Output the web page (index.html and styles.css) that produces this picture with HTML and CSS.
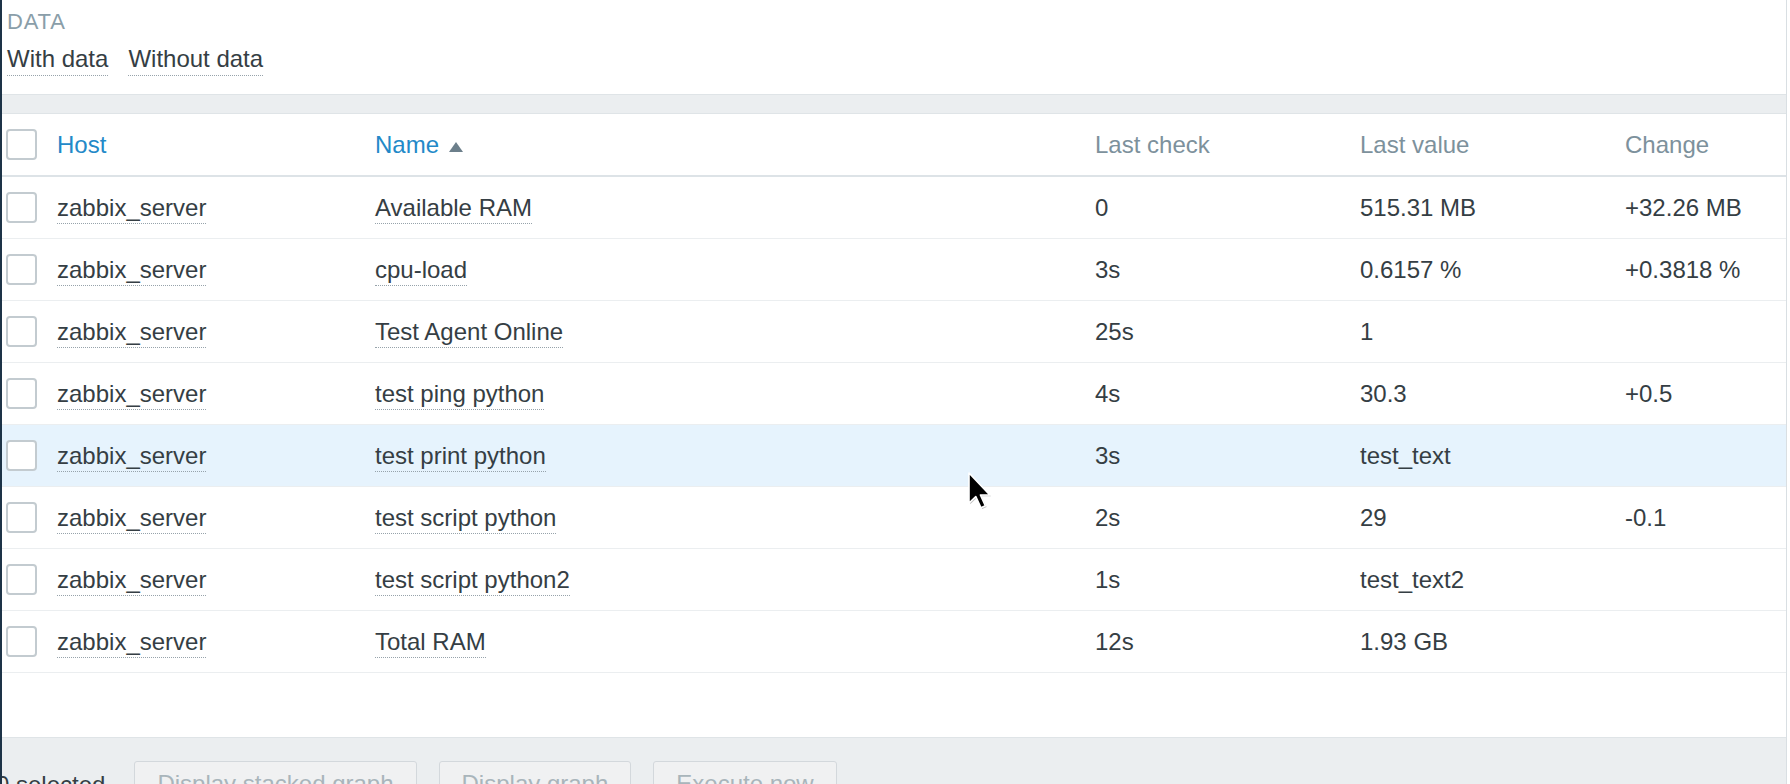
FILE: index.html
```html
<!DOCTYPE html>
<html>
<head>
<meta charset="utf-8">
<title>Latest data</title>
<link rel="stylesheet" href="styles.css">
</head>
<body>
<div class="page">
  <section class="subfilter">
    <div class="subfilter-label">DATA</div>
    <div class="subfilter-links">
      <span class="link">With data</span>
      <span class="link">Without data</span>
    </div>
  </section>
  <div class="band"></div>
  <div class="list">
    <table class="data-table">
      <colgroup>
        <col class="c-check">
        <col class="c-host">
        <col class="c-name">
        <col class="c-mid">
        <col class="c-mid">
        <col>
      </colgroup>
      <thead>
        <tr>
          <th><span class="checkbox"></span></th>
          <th><span class="sort-link">Host</span></th>
          <th><span class="sort-link">Name</span><span class="arrow-up"></span></th>
          <th>Last check</th>
          <th>Last value</th>
          <th>Change</th>
        </tr>
      </thead>
      <tbody>
        <tr>
          <td><span class="checkbox"></span></td>
          <td><span class="link">zabbix_server</span></td>
          <td><span class="link">Available RAM</span></td>
          <td>0</td>
          <td>515.31 MB</td>
          <td>+32.26 MB</td>
        </tr>
        <tr>
          <td><span class="checkbox"></span></td>
          <td><span class="link">zabbix_server</span></td>
          <td><span class="link">cpu-load</span></td>
          <td>3s</td>
          <td>0.6157 %</td>
          <td>+0.3818 %</td>
        </tr>
        <tr>
          <td><span class="checkbox"></span></td>
          <td><span class="link">zabbix_server</span></td>
          <td><span class="link">Test Agent Online</span></td>
          <td>25s</td>
          <td>1</td>
          <td></td>
        </tr>
        <tr>
          <td><span class="checkbox"></span></td>
          <td><span class="link">zabbix_server</span></td>
          <td><span class="link">test ping python</span></td>
          <td>4s</td>
          <td>30.3</td>
          <td>+0.5</td>
        </tr>
        <tr class="hover">
          <td><span class="checkbox"></span></td>
          <td><span class="link">zabbix_server</span></td>
          <td><span class="link">test print python</span></td>
          <td>3s</td>
          <td>test_text</td>
          <td></td>
        </tr>
        <tr>
          <td><span class="checkbox"></span></td>
          <td><span class="link">zabbix_server</span></td>
          <td><span class="link">test script python</span></td>
          <td>2s</td>
          <td>29</td>
          <td>-0.1</td>
        </tr>
        <tr>
          <td><span class="checkbox"></span></td>
          <td><span class="link">zabbix_server</span></td>
          <td><span class="link">test script python2</span></td>
          <td>1s</td>
          <td>test_text2</td>
          <td></td>
        </tr>
        <tr>
          <td><span class="checkbox"></span></td>
          <td><span class="link">zabbix_server</span></td>
          <td><span class="link">Total RAM</span></td>
          <td>12s</td>
          <td>1.93 GB</td>
          <td></td>
        </tr>
      </tbody>
    </table>
  </div>
  <footer class="action-bar">
    <span class="selected-count">0 selected</span>
    <button class="btn" disabled>Display stacked graph</button>
    <button class="btn" disabled>Display graph</button>
    <button class="btn" disabled>Execute now</button>
  </footer>
</div>
<svg class="cursor" width="26" height="40" viewBox="0 0 13 20" xmlns="http://www.w3.org/2000/svg">
  <path d="M1.6 1.6 L1.6 16.6 L5 13.4 L7.6 19 L9.8 18 L7.3 12.6 L12 12.6 Z" fill="rgba(0,0,0,0.25)"/>
  <path d="M1 1 L1 16 L4.4 12.8 L7 18.4 L9.2 17.4 L6.7 12 L11.4 12 Z" fill="#000" stroke="#fff" stroke-width="0.8" stroke-linejoin="round"/>
</svg>
</body>
</html>
```

FILE: styles.css
```css
html, body {
  margin: 0;
  padding: 0;
  height: 784px;
  overflow: hidden;
  background: #ffffff;
}

body {
  font-family: "Liberation Sans", Arial, sans-serif;
  font-size: 24px;
  color: #353e44;
  position: relative;
}

.page {
  width: 1784px;
  height: 784px;
  border-left: 2px solid #1d3347;
  border-right: 1px solid #d9dfe3;
  display: flex;
  flex-direction: column;
  overflow: hidden;
}

.subfilter {
  flex: none;
  padding: 10px 0 0 5px;
  height: 94px;
  box-sizing: border-box;
}

.subfilter-label {
  font-size: 22px;
  line-height: 24px;
  color: #8a9ea9;
  letter-spacing: 0.8px;
}

.subfilter-links {
  margin-top: 11px;
  line-height: 28px;
  display: flex;
  gap: 20px;
}

.link {
  border-bottom: 1px dotted #97a3ab;
  padding-bottom: 2px;
}

.band {
  flex: none;
  height: 18px;
  background: #ebeef0;
  border-top: 1px solid #dfe4e7;
  border-bottom: 1px solid #dfe4e7;
}

.list {
  flex: none;
  height: 623px;
}

.data-table {
  width: 100%;
  table-layout: fixed;
  border-collapse: collapse;
}

.c-check { width: 49px; }
.c-host { width: 318px; }
.c-name { width: 720px; }
.c-mid { width: 265px; }

.data-table th,
.data-table td {
  padding: 0 0 0 6px;
  text-align: left;
  white-space: nowrap;
  vertical-align: middle;
}

.data-table th {
  height: 61px;
  font-weight: normal;
  color: #7d919c;
  border-bottom: 2px solid #dde3e7;
}

.data-table td {
  height: 61px;
  border-bottom: 1px solid #ebeef0;
}

.data-table th:first-child,
.data-table td:first-child {
  padding-left: 4px;
}

.data-table tr.hover td {
  background: #e6f3fd;
}

.sort-link {
  color: #2389c8;
}

.arrow-up {
  display: inline-block;
  width: 0;
  height: 0;
  margin-left: 10px;
  border-left: 7px solid transparent;
  border-right: 7px solid transparent;
  border-bottom: 10px solid #6c7f8b;
  vertical-align: 1px;
}

.checkbox {
  display: block;
  width: 27px;
  height: 27px;
  border: 2px solid #c3cbd0;
  border-radius: 4px;
  background: #ffffff;
}

.action-bar {
  flex: 1;
  min-height: 0;
  background: #ebeef0;
  border-top: 1px solid #dfe4e7;
  display: flex;
  align-items: flex-start;
  gap: 22px;
  padding-top: 23px;
}

.selected-count {
  margin-left: -6px;
  margin-right: 7px;
  line-height: 44px;
  padding-top: 2px;
  flex: none;
}

.btn {
  font-family: "Liberation Sans", Arial, sans-serif;
  font-size: 24px;
  height: 46px;
  padding: 0 22px;
  background: #f0f1f2;
  border: 1px solid #d3d8dc;
  border-radius: 3px;
  color: #a9b5bb;
  flex: none;
}

.cursor {
  position: absolute;
  left: 967px;
  top: 471px;
}
```
